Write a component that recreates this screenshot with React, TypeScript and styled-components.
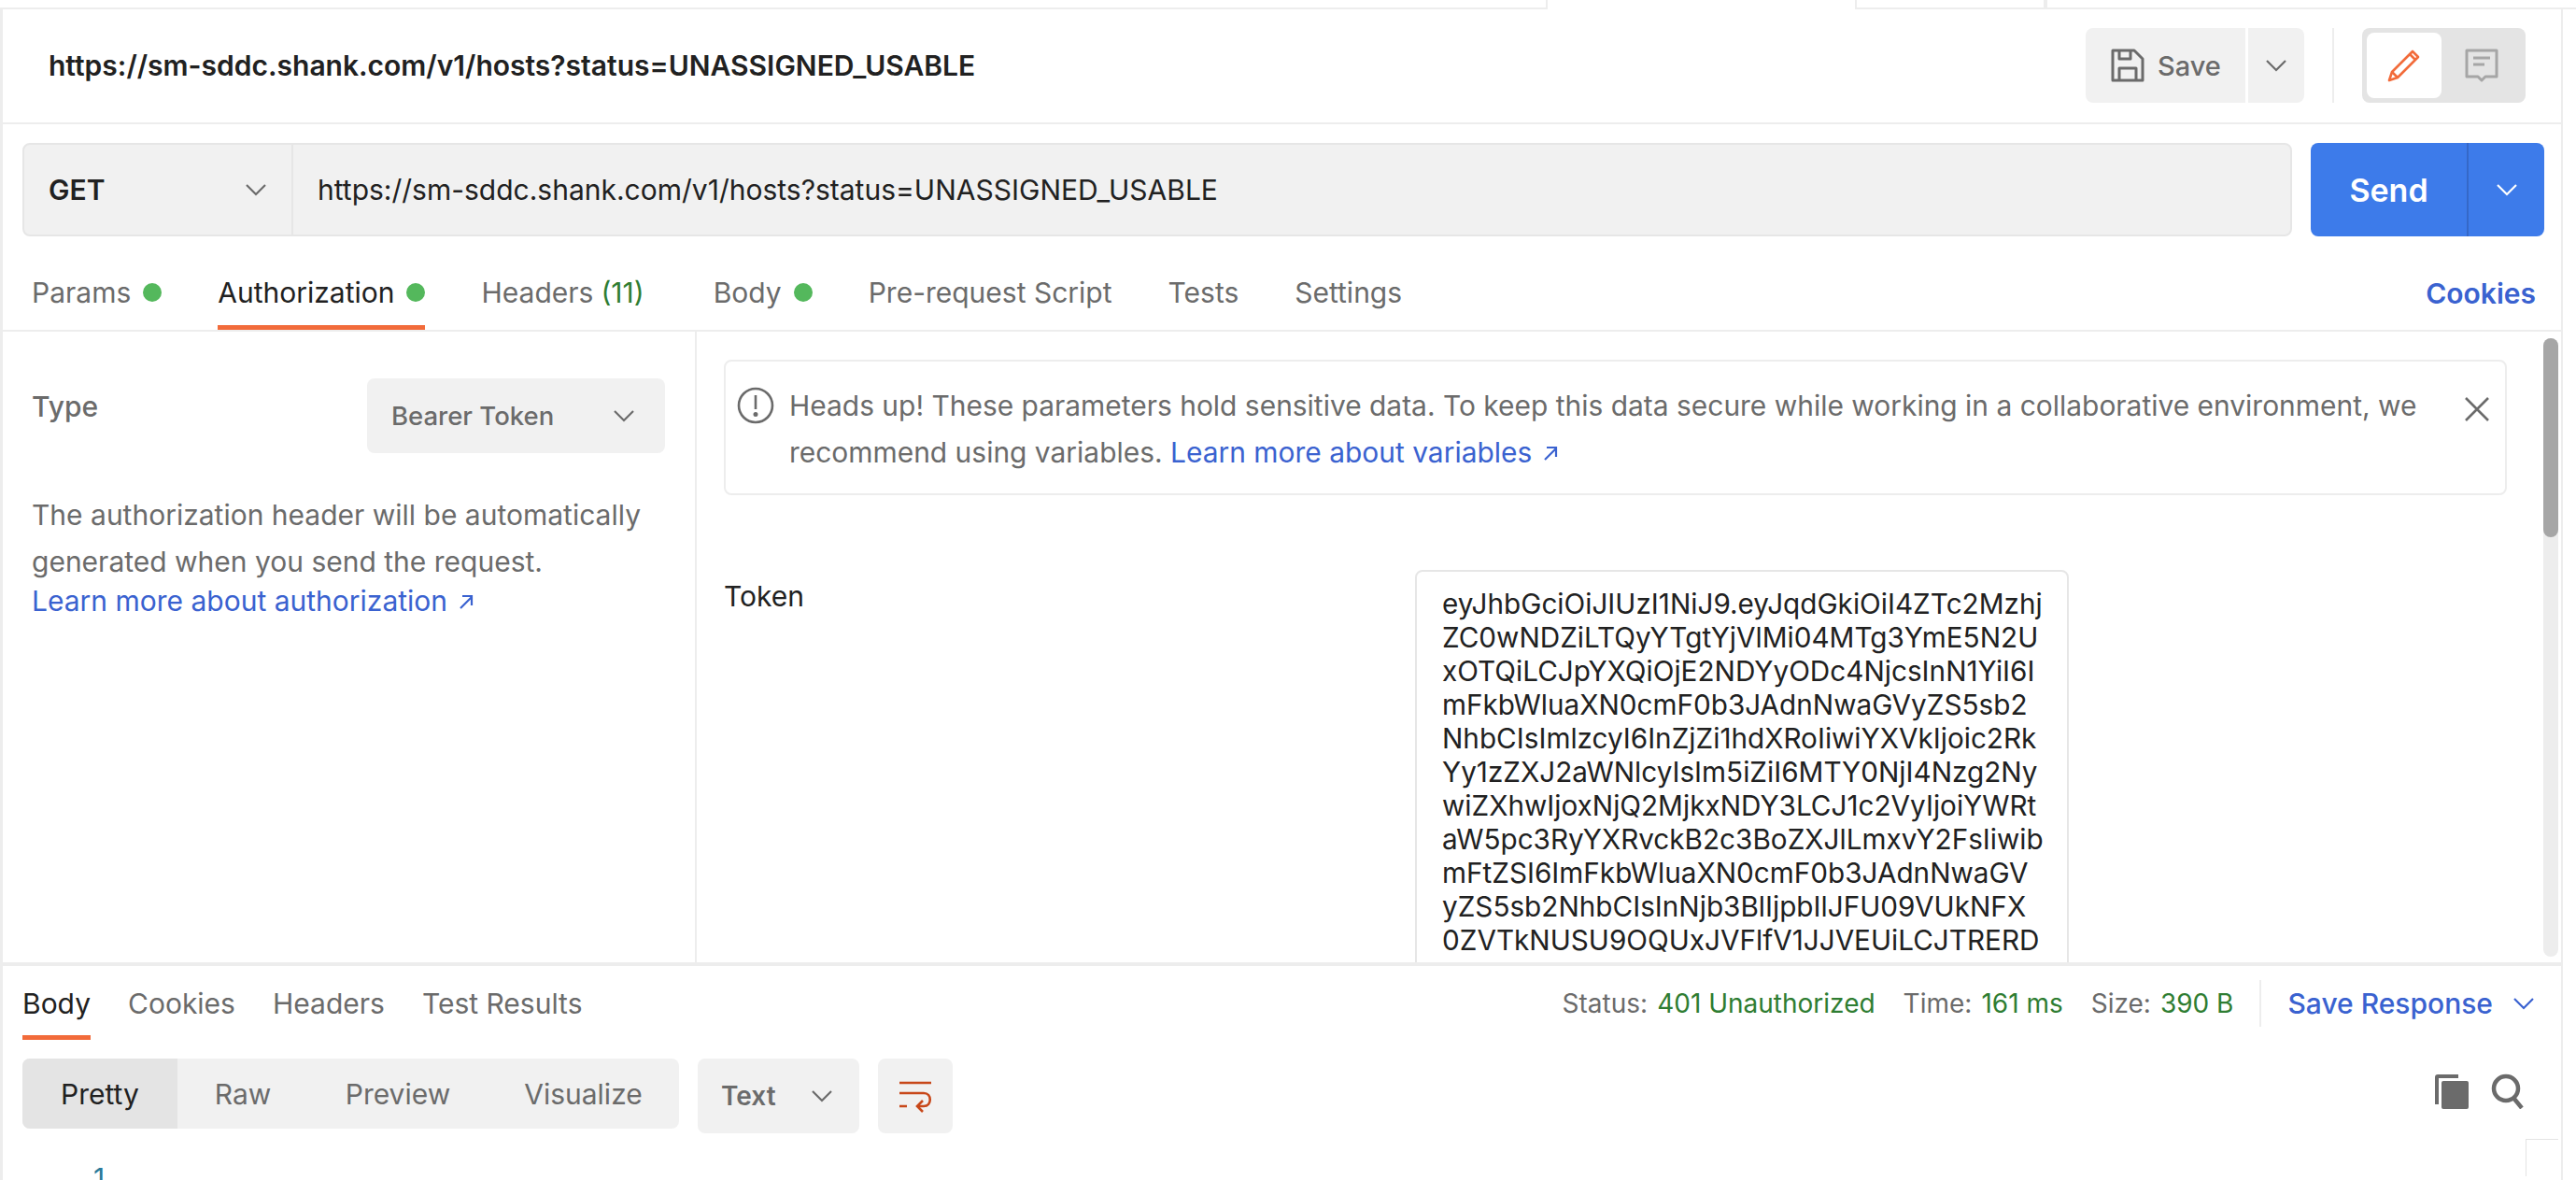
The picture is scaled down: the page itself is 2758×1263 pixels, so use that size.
import styled, { createGlobalStyle } from 'styled-components'

const GlobalStyle = createGlobalStyle`
  html, body {
    margin: 0;
    padding: 0;
    background: #fff;
    overflow: hidden;
  }
  * {
    box-sizing: border-box;
  }
`

const Page = styled.div`
  width: 2758px;
  height: 1263px;
  overflow: hidden;
  display: flex;
  flex-direction: column;
  font-family: Inter, 'Liberation Sans', sans-serif;
  font-size: 30px;
  color: #6b6b6b;
  background: #fff;
`

const TabStrip = styled.div`
  display: flex;
  height: 10px;
  flex: none;
`

const StripCell = styled.div<{ $width?: number; $active?: boolean }>`
  height: 10px;
  width: ${(p) => (p.$width ? `${p.$width}px` : 'auto')};
  flex: ${(p) => (p.$width ? 'none' : 1)};
  border-bottom: ${(p) => (p.$active ? 'none' : '2px solid #ededed')};
  border-left: ${(p) => (p.$active ? '2px solid #ededed' : 'none')};
  border-right: ${(p) => (p.$active ? '2px solid #ededed' : 'none')};
`

const Frame = styled.div`
  width: 2744px;
  flex: 1;
  min-height: 0;
  display: flex;
  flex-direction: column;
  border-left: 3px solid #ededed;
  border-right: 2px solid #ededed;
`

const TitleBar = styled.div`
  height: 123px;
  flex: none;
  display: flex;
  align-items: center;
  justify-content: space-between;
  padding: 0 38px 1px 49px;
  border-bottom: 2px solid #ededed;
`

const Title = styled.div`
  font-size: 30px;
  font-weight: 600;
  color: #212121;
  white-space: nowrap;
`

const TitleActions = styled.div`
  display: flex;
  align-items: stretch;
  height: 80px;
`

const SaveButton = styled.div`
  width: 171px;
  display: flex;
  align-items: center;
  gap: 14px;
  padding-left: 27px;
  background: #f1f1f1;
  border-radius: 8px 0 0 8px;
  font-weight: 500;
  font-size: 29px;
`

const SaveCaret = styled.div`
  width: 60px;
  margin-left: 3px;
  display: flex;
  align-items: center;
  justify-content: center;
  background: #f1f1f1;
  border-radius: 0 8px 8px 0;
`

const VDivider = styled.div`
  width: 2px;
  background: #ededed;
  margin: 0 30px;
`

const ModeToggle = styled.div`
  width: 175px;
  padding: 5px;
  display: flex;
  background: #e4e4e4;
  border-radius: 8px;
`

const ModeOption = styled.div<{ $active?: boolean }>`
  width: 80px;
  display: flex;
  align-items: center;
  justify-content: center;
  border-radius: 8px;
  background: ${(p) => (p.$active ? '#fff' : 'transparent')};
  margin-left: ${(p) => (p.$active ? 0 : '3px')};
`

const RequestRow = styled.div`
  height: 100px;
  margin: 20px 18px 0 21px;
  flex: none;
  display: flex;
  gap: 20px;
`

const UrlBox = styled.div`
  flex: 1;
  display: flex;
  background: #f1f1f1;
  border: 2px solid #e6e6e6;
  border-radius: 8px;
`

const MethodSelect = styled.div`
  width: 288px;
  display: flex;
  align-items: center;
  justify-content: space-between;
  padding: 0 27px 0 26px;
  font-weight: 600;
  color: #212121;
  border-right: 2px solid #e6e6e6;
`

const UrlText = styled.div`
  display: flex;
  align-items: center;
  padding-left: 26px;
  color: #212121;
  white-space: nowrap;
`

const SendButton = styled.div`
  width: 250px;
  display: flex;
  background: #3d7bea;
  border-radius: 8px;
  color: #fff;
`

const SendLabel = styled.div`
  width: 169px;
  display: flex;
  align-items: center;
  justify-content: center;
  font-size: 34px;
  font-weight: 600;
  border-right: 2px solid #3568c8;
`

const SendCaret = styled.div`
  flex: 1;
  display: flex;
  align-items: center;
  justify-content: center;
`

const RequestTabs = styled.div`
  height: 102px;
  flex: none;
  display: flex;
  justify-content: space-between;
  padding: 0 27px 0 31px;
  border-bottom: 2px solid #ededed;
`

const TabGroup = styled.div<{ $gap: number }>`
  display: flex;
  gap: ${(p) => p.$gap}px;
`

const Tab = styled.div<{ $active?: boolean; $height: number; $drop?: number }>`
  height: ${(p) => p.$height}px;
  padding-top: ${(p) => p.$drop ?? 0}px;
  display: flex;
  align-items: center;
  gap: 13px;
  white-space: nowrap;
  color: ${(p) => (p.$active ? '#212121' : '#6b6b6b')};
  box-shadow: ${(p) => (p.$active ? 'inset 0 -5px 0 #f26b3a' : 'none')};
`

const Dot = styled.span`
  width: 20px;
  height: 20px;
  border-radius: 50%;
  background: #54b85c;
`

const Count = styled.span`
  color: #2f7d32;
  margin-left: -5px;
  margin-right: 14px;
`

const LinkText = styled.a`
  color: #3a62d0;
  text-decoration: none;
  white-space: nowrap;
`

const CookiesLink = styled(LinkText)`
  display: flex;
  align-items: center;
  font-weight: 600;
  height: 102px;
  padding-top: 20px;
`

const AuthArea = styled.div`
  height: 675px;
  flex: none;
  display: flex;
  overflow: hidden;
`

const AuthSide = styled.div`
  width: 743px;
  flex: none;
  padding: 50px 32px 0 31px;
  border-right: 2px solid #ededed;
`

const TypeRow = styled.div`
  display: flex;
  justify-content: space-between;
  align-items: flex-start;
`

const TypeLabel = styled.div`
  font-weight: 500;
  padding-top: 12px;
`

const TypeSelect = styled.div`
  width: 319px;
  height: 80px;
  display: flex;
  align-items: center;
  justify-content: space-between;
  padding: 0 33px 0 26px;
  background: #f1f1f1;
  border-radius: 8px;
  font-weight: 500;
  font-size: 27.5px;
`

const AuthHelp = styled.div`
  margin-top: 41px;
  line-height: 50px;
`

const AuthLinkRow = styled.div`
  margin-top: -5px;
  line-height: 44px;
`

const AuthMain = styled.div`
  flex: 1;
  min-width: 0;
  display: flex;
`

const AuthForm = styled.div`
  flex: 1;
  min-width: 0;
  padding: 30px 0 0 29px;
`

const Notice = styled.div`
  width: 1909px;
  height: 145px;
  position: relative;
  display: flex;
  gap: 14px;
  padding: 22px 0 0 12px;
  border: 2px solid #ededed;
  border-radius: 8px;
  font-size: 29.95px;
  line-height: 50px;
`

const NoticeText = styled.div`
  white-space: nowrap;
`

const NoticeIcon = styled.div`
  flex: none;
  height: 50px;
  width: 42px;
  display: flex;
  align-items: center;
`

const NoticeClose = styled.div`
  position: absolute;
  right: 16px;
  top: 37px;
  display: flex;
`

const TokenRow = styled.div`
  margin-top: 80px;
  display: flex;
`

const TokenLabel = styled.div`
  width: 740px;
  color: #212121;
  padding-top: 10px;
`

const TokenBox = styled.div`
  width: 700px;
  height: 520px;
  padding: 16px 0 0 27px;
  border: 2px solid #e6e6e6;
  border-radius: 8px;
  color: #212121;
  font-size: 29.7px;
  line-height: 36px;
`

const TokenLine = styled.div`
  white-space: nowrap;
`

const ScrollTrack = styled.div`
  width: 16px;
  flex: none;
  margin: 7px 3px 6px 0;
  background: #ededed;
  border-radius: 8px;
`

const ScrollThumb = styled.div`
  height: 213px;
  background: #a6a6a6;
  border-radius: 8px;
`

const ResponsePane = styled.div`
  flex: 1;
  min-height: 0;
  border-top: 4px solid #ededed;
  display: flex;
  flex-direction: column;
`

const ResponseHead = styled.div`
  height: 79px;
  flex: none;
  display: flex;
  justify-content: space-between;
  padding: 0 29px 0 21px;
`

const ResponseMeta = styled.div`
  display: flex;
  align-items: center;
  height: 79px;
  font-size: 28px;
  white-space: nowrap;
`

const MetaItem = styled.span`
  margin-right: 30px;
`

const MetaValue = styled.span`
  color: #2f7d32;
  margin-left: 10px;
`

const MetaDivider = styled.div`
  width: 2px;
  height: 50px;
  background: #ededed;
  margin: 0 28px 0 -2px;
`

const SaveResponse = styled(LinkText)`
  display: flex;
  align-items: center;
  gap: 22px;
  font-weight: 500;
  font-size: 30px;
`

const ViewBar = styled.div`
  margin: 20px 39px 0 21px;
  display: flex;
  align-items: flex-start;
  gap: 20px;
`

const Segments = styled.div`
  width: 703px;
  height: 75px;
  display: flex;
  background: #f1f1f1;
  border-radius: 8px;
  overflow: hidden;
`

const Segment = styled.div<{ $active?: boolean; $width: number }>`
  width: ${(p) => p.$width}px;
  display: flex;
  align-items: center;
  justify-content: center;
  color: ${(p) => (p.$active ? '#212121' : '#6b6b6b')};
  background: ${(p) => (p.$active ? '#e4e4e4' : 'transparent')};
`

const FormatSelect = styled.div`
  width: 173px;
  height: 80px;
  display: flex;
  align-items: center;
  justify-content: space-between;
  padding: 0 29px 0 25px;
  background: #f1f1f1;
  border-radius: 8px;
  font-weight: 600;
  font-size: 28px;
`

const WrapButton = styled.div`
  width: 80px;
  height: 80px;
  display: flex;
  align-items: center;
  justify-content: center;
  background: #f1f1f1;
  border-radius: 8px;
`

const ViewTools = styled.div`
  margin-left: auto;
  display: flex;
  align-items: center;
  gap: 24px;
  padding-top: 16px;
`

const CodeArea = styled.div`
  position: relative;
  flex: 1;
  padding: 30px 0 0 97px;
  color: #2a7a9a;
`

const CornerBox = styled.div`
  position: absolute;
  right: 3px;
  top: 6px;
  width: 35px;
  height: 40px;
  border-top: 1px solid #e4e4e4;
  border-left: 1px solid #e4e4e4;
`

const Caret = ({ color = '#6b6b6b', size = 22 }: { color?: string; size?: number }) => (
  <svg width={size} height={size} viewBox='0 0 22 22' fill='none'>
    <path d='M1 6l10 10L21 6' stroke={color} strokeWidth='2.2' />
  </svg>
)

const SaveIcon = () => (
  <svg width='36' height='36' viewBox='0 0 36 36' fill='none' stroke='#6b6b6b' strokeWidth='3' strokeLinejoin='round'>
    <path d='M2 2h23l9 9v23H2z' />
    <path d='M9 2v9h12V2M9 34V21h18v13' />
  </svg>
)

const PencilIcon = () => (
  <svg width='36' height='36' viewBox='0 0 36 36' fill='none' stroke='#f26b3a' strokeWidth='2.6' strokeLinejoin='round'>
    <path d='M2 34l3-9L27 3l6 6-22 22z' />
    <path d='M24 6l6 6M5 25l6 6' />
  </svg>
)

const CommentIcon = () => (
  <svg width='36' height='36' viewBox='0 0 36 36' fill='none' stroke='#a6a6a6' strokeWidth='3'>
    <path d='M2 2h32v28H22l-4 4-4-4H2z' strokeLinejoin='round' />
    <path d='M9 10h18M9 17h12' />
  </svg>
)

const AlertIcon = () => (
  <svg width='40' height='40' viewBox='0 0 40 40' fill='none' stroke='#6b6b6b' strokeWidth='2.6'>
    <circle cx='20' cy='20' r='18' />
    <path d='M20 9v15' />
    <circle cx='20' cy='29.5' r='1.2' fill='#6b6b6b' />
  </svg>
)

const CloseIcon = () => (
  <svg width='28' height='28' viewBox='0 0 28 28' fill='none' stroke='#6b6b6b' strokeWidth='2.6'>
    <path d='M2 2l24 24M26 2L2 26' />
  </svg>
)

const ExternalIcon = () => (
  <svg width='20' height='20' viewBox='0 0 20 20' fill='none' stroke='#3a62d0' strokeWidth='2.2' style={{ marginLeft: 10 }}>
    <path d='M4 17L16 5M6 4h10v10' />
  </svg>
)

const WrapIcon = () => (
  <svg width='36' height='36' viewBox='0 0 36 36' fill='none' stroke='#c8481a' strokeWidth='2.6'>
    <path d='M1 4h34M1 15h26c9 0 9 14 0 14h-6M1 29h8' />
    <path d='M26 23l-6 6 6 6' />
  </svg>
)

const CopyIcon = () => (
  <svg width='36' height='38' viewBox='0 0 36 38' fill='#6b6b6b'>
    <path d='M0 4a3 3 0 013-3h22v4H4v28H0z' />
    <rect x='7' y='8' width='29' height='30' rx='2' />
  </svg>
)

const SearchIcon = () => (
  <svg width='36' height='38' viewBox='0 0 36 38' fill='none' stroke='#6b6b6b' strokeWidth='4.5'>
    <circle cx='16' cy='16' r='13' />
    <path d='M24 26l9 11' />
  </svg>
)

const tokenLines = [
  'eyJhbGciOiJIUzI1NiJ9.eyJqdGkiOiI4ZTc2Mzhj',
  'ZC0wNDZiLTQyYTgtYjVlMi04MTg3YmE5N2U',
  'xOTQiLCJpYXQiOjE2NDYyODc4NjcsInN1YiI6I',
  'mFkbWluaXN0cmF0b3JAdnNwaGVyZS5sb2',
  'NhbCIsImlzcyI6InZjZi1hdXRoIiwiYXVkIjoic2Rk',
  'Yy1zZXJ2aWNlcyIsIm5iZiI6MTY0NjI4Nzg2Ny',
  'wiZXhwIjoxNjQ2MjkxNDY3LCJ1c2VyIjoiYWRt',
  'aW5pc3RyYXRvckB2c3BoZXJlLmxvY2FsIiwib',
  'mFtZSI6ImFkbWluaXN0cmF0b3JAdnNwaGV',
  'yZS5sb2NhbCIsInNjb3BlIjpbIlJFU09VUkNFX',
  '0ZVTkNUSU9OQUxJVFlfV1JJVEUiLCJTRERD',
]

const url = 'https://sm-sddc.shank.com/v1/hosts?status=UNASSIGNED_USABLE'

const App = () => (
  <Page>
    <GlobalStyle />
    <TabStrip>
      <StripCell $width={1655} />
      <StripCell $width={333} $active />
      <StripCell $width={200} />
      <StripCell $active $width={2} />
      <StripCell />
    </TabStrip>
    <Frame>
      <TitleBar>
        <Title>{url}</Title>
        <TitleActions>
          <SaveButton>
            <SaveIcon />
            Save
          </SaveButton>
          <SaveCaret>
            <Caret />
          </SaveCaret>
          <VDivider />
          <ModeToggle>
            <ModeOption $active>
              <PencilIcon />
            </ModeOption>
            <ModeOption>
              <CommentIcon />
            </ModeOption>
          </ModeToggle>
        </TitleActions>
      </TitleBar>
      <RequestRow>
        <UrlBox>
          <MethodSelect>
            GET
            <Caret />
          </MethodSelect>
          <UrlText>{url}</UrlText>
        </UrlBox>
        <SendButton>
          <SendLabel>Send</SendLabel>
          <SendCaret>
            <Caret color='#fff' />
          </SendCaret>
        </SendButton>
      </RequestRow>
      <RequestTabs>
        <TabGroup $gap={60}>
          <Tab $height={100} $drop={20}>
            Params <Dot />
          </Tab>
          <Tab $height={100} $drop={20} $active>
            Authorization <Dot />
          </Tab>
          <Tab $height={100} $drop={20}>
            Headers <Count>(11)</Count>
          </Tab>
          <Tab $height={100} $drop={20}>
            Body <Dot />
          </Tab>
          <Tab $height={100} $drop={20}>Pre-request Script</Tab>
          <Tab $height={100} $drop={20}>Tests</Tab>
          <Tab $height={100} $drop={20}>Settings</Tab>
        </TabGroup>
        <CookiesLink>Cookies</CookiesLink>
      </RequestTabs>
      <AuthArea>
        <AuthSide>
          <TypeRow>
            <TypeLabel>Type</TypeLabel>
            <TypeSelect>
              Bearer Token
              <Caret />
            </TypeSelect>
          </TypeRow>
          <AuthHelp>
            The authorization header will be automatically generated when you send the request.
          </AuthHelp>
          <AuthLinkRow>
            <LinkText>
              Learn more about authorization
              <ExternalIcon />
            </LinkText>
          </AuthLinkRow>
        </AuthSide>
        <AuthMain>
          <AuthForm>
            <Notice>
              <NoticeIcon>
                <AlertIcon />
              </NoticeIcon>
              <NoticeText>
                Heads up! These parameters hold sensitive data. To keep this data secure while working in a collaborative environment, we
                <br />
                recommend using variables. <LinkText>Learn more about variables<ExternalIcon /></LinkText>
              </NoticeText>
              <NoticeClose>
                <CloseIcon />
              </NoticeClose>
            </Notice>
            <TokenRow>
              <TokenLabel>Token</TokenLabel>
              <TokenBox>
                {tokenLines.map((line) => (
                  <TokenLine key={line}>{line}</TokenLine>
                ))}
              </TokenBox>
            </TokenRow>
          </AuthForm>
          <ScrollTrack>
            <ScrollThumb />
          </ScrollTrack>
        </AuthMain>
      </AuthArea>
      <ResponsePane>
        <ResponseHead>
          <TabGroup $gap={40}>
            <Tab $height={79} $active>Body</Tab>
            <Tab $height={79}>Cookies</Tab>
            <Tab $height={79}>Headers</Tab>
            <Tab $height={79}>Test Results</Tab>
          </TabGroup>
          <ResponseMeta>
            <MetaItem>Status:<MetaValue>401 Unauthorized</MetaValue></MetaItem>
            <MetaItem>Time:<MetaValue>161 ms</MetaValue></MetaItem>
            <MetaItem>Size:<MetaValue>390 B</MetaValue></MetaItem>
            <MetaDivider />
            <SaveResponse>
              Save Response
              <Caret color='#3a62d0' />
            </SaveResponse>
          </ResponseMeta>
        </ResponseHead>
        <ViewBar>
          <Segments>
            <Segment $active $width={166}>Pretty</Segment>
            <Segment $width={140}>Raw</Segment>
            <Segment $width={192}>Preview</Segment>
            <Segment $width={205}>Visualize</Segment>
          </Segments>
          <FormatSelect>
            Text
            <Caret />
          </FormatSelect>
          <WrapButton>
            <WrapIcon />
          </WrapButton>
          <ViewTools>
            <CopyIcon />
            <SearchIcon />
          </ViewTools>
        </ViewBar>
        <CodeArea>
          1
          <CornerBox />
        </CodeArea>
      </ResponsePane>
    </Frame>
  </Page>
)

export default App
